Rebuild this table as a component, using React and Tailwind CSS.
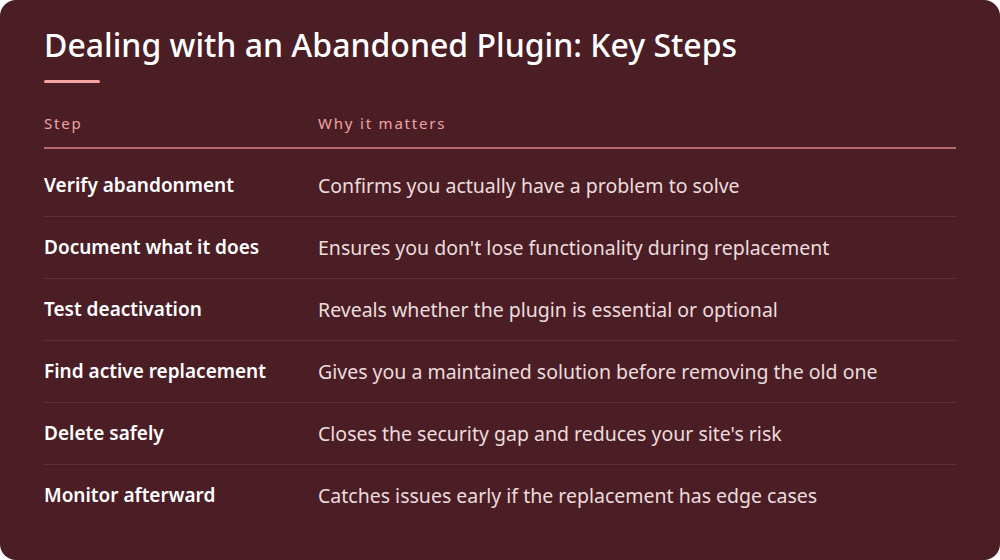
const rows = [
  ["Verify abandonment", "Confirms you actually have a problem to solve"],
  ["Document what it does", "Ensures you don't lose functionality during replacement"],
  ["Test deactivation", "Reveals whether the plugin is essential or optional"],
  ["Find active replacement", "Gives you a maintained solution before removing the old one"],
  ["Delete safely", "Closes the security gap and reduces your site's risk"],
  ["Monitor afterward", "Catches issues early if the replacement has edge cases"],
];

export default function App() {
  return (
    <div className="w-[1000px] h-[560px] bg-white">
      <div
        className="w-full h-full rounded-[16px] bg-[#4b1e26] px-[44px] pt-[25px]"
        style={{ fontFamily: '"Noto Sans", sans-serif' }}
      >
        <h1 className="text-[32px] leading-[40px] font-medium text-white">
          Dealing with an Abandoned Plugin: Key Steps
        </h1>
        <div className="mt-[15px] w-[56px] h-[3px] rounded-full bg-[#f4a3a3]" />

        <div className="mt-[30px] flex border-b-2 border-[#b86b6d] pb-[14px] text-[15px] leading-[20px] tracking-[1.8px] text-[#f0a2a2]">
          <div className="w-[274px]">Step</div>
          <div>Why it matters</div>
        </div>

        <div className="pt-[6px]">
          {rows.map(([step, why], i) => (
            <div
              key={step}
              className={`flex py-[17px] leading-[27px] ${
                i < rows.length - 1 ? "border-b border-[#5e2f37]" : ""
              }`}
            >
              <div className="w-[274px] text-[19px] font-semibold text-white">{step}</div>
              <div className="text-[19.5px] text-[#ecdcdd]">{why}</div>
            </div>
          ))}
        </div>
      </div>
    </div>
  );
}
